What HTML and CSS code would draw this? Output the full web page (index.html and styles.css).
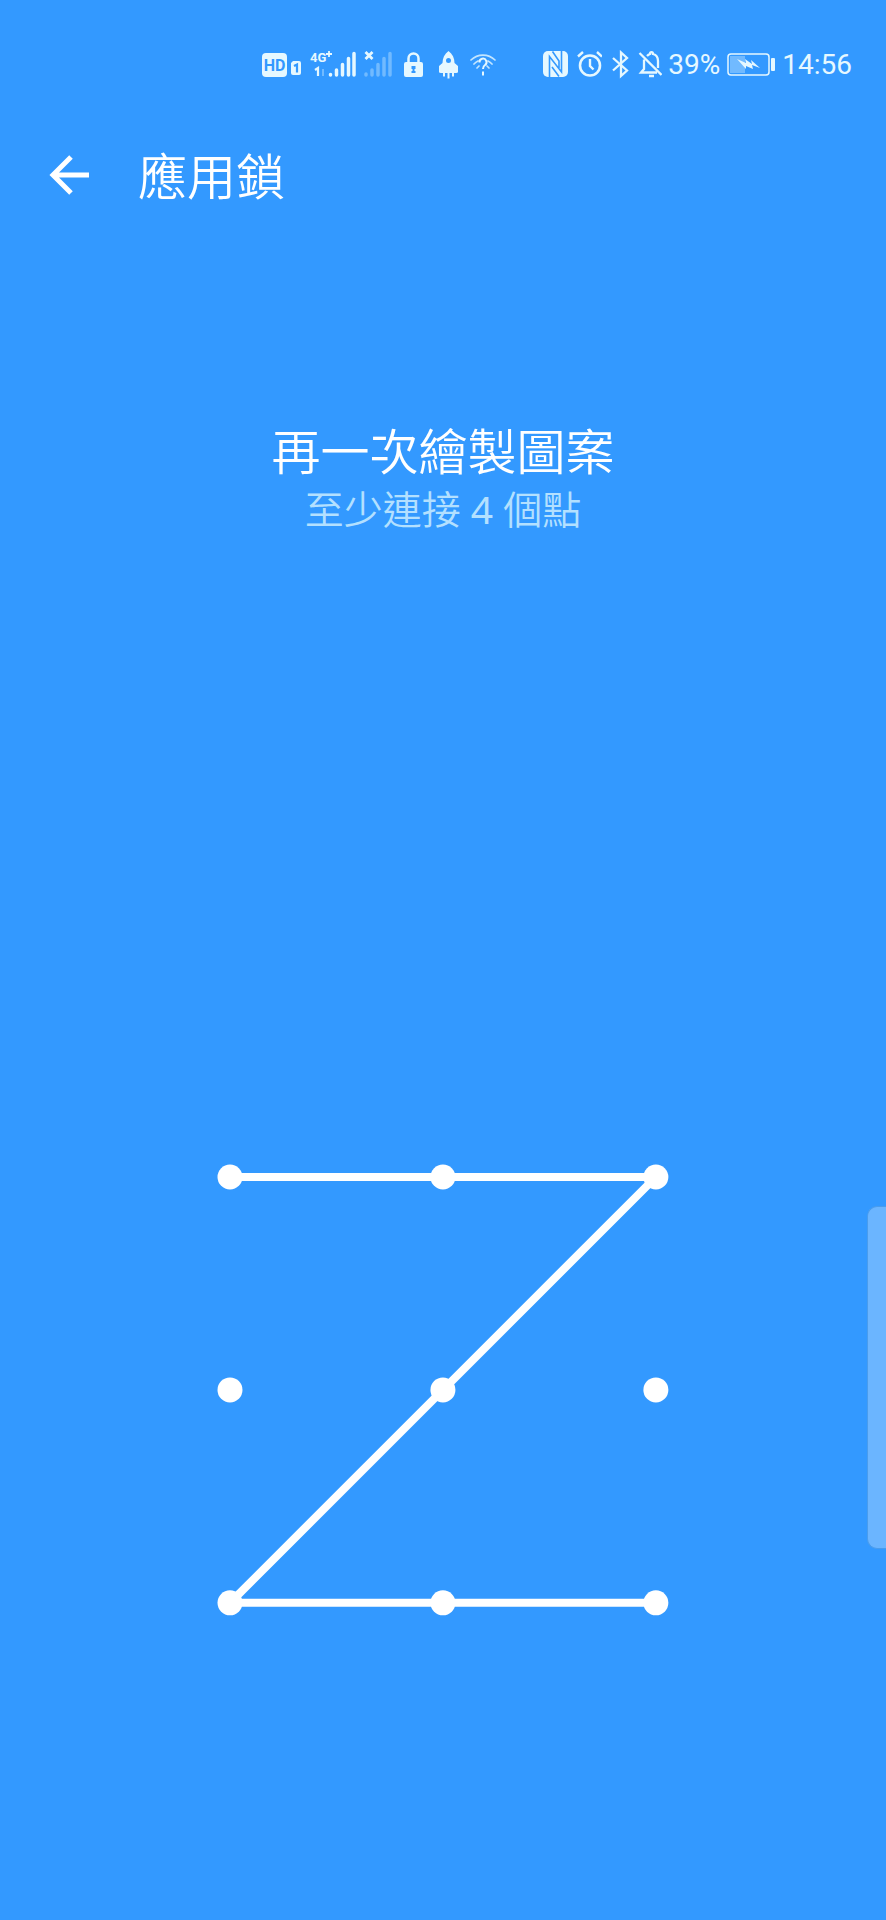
FILE: index.html
```html
<!DOCTYPE html>
<html lang="zh-Hant">
<head>
<meta charset="utf-8">
<meta name="viewport" content="width=device-width, initial-scale=1">
<title>應用鎖</title>
<link rel="stylesheet" href="styles.css">
</head>
<body>
<div class="status-bar">
  <div class="status-group">
    <svg width="40" height="30" viewBox="0 0 40 30" role="img" aria-label="HD 1">
      <rect x="0" y="3" width="25" height="24" rx="4" class="fill"/>
      <text x="12.500" y="21" class="hd">HD</text>
      <path d="M31 11h6a2 2 0 0 1 2 2v10a2 2 0 0 1-2 2h-6a2 2 0 0 1-2-2v-10z" class="fill"/>
      <path d="M32 16l3-1.500v8" class="cut" stroke-width="2.200"/>
    </svg>
    <svg width="46" height="30" viewBox="0 0 46 30" role="img" aria-label="4G+">
      <text x="0" y="12" class="net">4G</text>
      <path d="M16 4h6M19 1v6" class="line" stroke-width="1.800"/>
      <path d="M5 20l3-2v8" class="line" stroke-width="2.200"/>
      <path d="M13 19v7" class="line faint" stroke-width="2"/>
      <path d="M20.500 24.500v.5M26.500 20v5M32.500 14.500v10.500M38.500 8.500v16.500M44 3.500v21.500" class="line round" stroke-width="3.500"/>
    </svg>
    <svg width="28" height="30" viewBox="0 0 28 30" role="img" aria-label="無訊號">
      <path d="M1.500 2l7 7M8.500 2l-7 7" class="line" stroke-width="2.800"/>
      <path d="M2 24v1M8 20v5M14 14.500v10.500M20 8.500v16.500M26 3.500v21.500" class="line round faint" stroke-width="3.500"/>
    </svg>
    <svg width="28" height="30" viewBox="0 0 28 30" aria-hidden="true">
      <path d="M8.500 13V8.500a5 5 0 0 1 10 0V13" class="line" stroke-width="2.500"/>
      <rect x="4" y="12" width="19" height="15" rx="2" class="fill"/>
      <path d="M11.500 16h4v3h-1v2h1v2h-4v-2h1v-2h-1z" class="bg"/>
    </svg>
    <svg width="26" height="30" viewBox="0 0 26 30" aria-hidden="true">
      <path fill-rule="evenodd" d="M12.500 1c4 3 6 7 6 12l3.500 3v6q0 1-2 1h-15q-2 0-2-1v-6l3.500-3c0-5 2-9 6-12zM12.500 8a2.500 2.500 0 1 0 0 5 2.500 2.500 0 0 0 0-5z" class="fill"/>
      <path d="M8 22v4.500M12.500 22v6.500M17 22v4.500" class="line" stroke-width="2"/>
    </svg>
    <svg width="26" height="30" viewBox="0 0 26 30" aria-hidden="true">
      <path d="M1 10a17 17 0 0 1 24 0M4 14a12 12 0 0 1 4-3M22 14a12 12 0 0 0-4-3M7 18l2-2M19 18l-2-2" class="line round thin" stroke-width="1.700"/>
      <path d="M9.500 12.500a3.500 3.500 0 1 1 5.500 2.500c-1.500 1-2 1.500-2 4M13 21.500v4" class="line" stroke-width="2"/>
    </svg>
  </div>
  <div class="status-group status-right">
    <svg width="26" height="30" viewBox="0 0 26 30" aria-hidden="true">
      <rect x="1" y="1" width="25" height="26" rx="5" class="fill"/>
      <path d="M7.500 28V6.500L19.500 22V0M10.500 1.500l6.500 9.500V18M10 17l7 9.500" class="cut" stroke-width="1.600"/>
    </svg>
    <svg width="26" height="30" viewBox="0 0 26 30" aria-hidden="true">
      <circle cx="14" cy="15.500" r="10" class="line" stroke-width="2.600"/>
      <path d="M14 9v7l3.500 3.500M2 6.500l5-4.500M26 6.500l-5-4.500" class="line" stroke-width="2.400"/>
    </svg>
    <svg width="20" height="30" viewBox="0 0 20 30" aria-hidden="true">
      <path d="M3 8l14 12.500-6 5.500V2.500l6 5.500-14 12.500" class="line" stroke-width="2.300"/>
    </svg>
    <svg width="24" height="30" viewBox="0 0 24 30" aria-hidden="true">
      <path d="M1.500 3l22 22M6 9.500v9.500l-3 3.500h16M9 6q1.500-1.500 3-2c0-2.500 3-2.500 3 0 4 1 5 4 5 7v7M11 26h5" class="line" stroke-width="2.300"/>
    </svg>
    <span class="readout">39%</span>
    <svg width="50" height="30" viewBox="0 0 50 30" role="img" aria-label="充電中">
      <rect x="2" y="4" width="41" height="21" rx="3" class="line" stroke-width="1.500"/>
      <rect x="4" y="6" width="15" height="17" class="fill faint"/>
      <path d="M11 9l9 4-1-4 7 5-1-4 9 8-8-3 1 4-7-3 0 3z" class="fill"/>
      <rect x="45" y="8" width="4" height="13" rx="1" class="fill"/>
    </svg>
    <span class="readout">14:56</span>
  </div>
</div>

<header class="app-bar">
  <button class="back" type="button" aria-label="返回">
    <svg width="42" height="42" viewBox="0 0 42 42" aria-hidden="true">
      <path d="M41 22H5M23 4L5 22l18 18" class="arrow"/>
    </svg>
  </button>
  <h1 class="title">應用鎖</h1>
</header>

<main class="lock">
  <h2 class="prompt">再一次繪製圖案</h2>
  <p class="hint">至少連接 <span class="count">4</span> 個點</p>
  <svg class="pattern" viewBox="0 0 452 452" role="img" aria-label="解鎖圖案">
    <path class="trace" d="M13 13H439L13 439H439"/>
    <g class="dots">
      <circle cx="13" cy="13" r="12.500"/><circle cx="226" cy="13" r="12.500"/><circle cx="439" cy="13" r="12.500"/>
      <circle cx="13" cy="226" r="12.500"/><circle cx="226" cy="226" r="12.500"/><circle cx="439" cy="226" r="12.500"/>
      <circle cx="13" cy="439" r="12.500"/><circle cx="226" cy="439" r="12.500"/><circle cx="439" cy="439" r="12.500"/>
    </g>
  </svg>
</main>
<div class="edge-handle"></div>
</body>
</html>
```
FILE: styles.css
```css
* {
  box-sizing: border-box;
}

body {
  margin: 0;
  min-height: 100vh;
  background: #3399ff;
  color: #fff;
  font-family: "Noto Sans CJK TC", sans-serif;
  font-weight: 350;
}

.status-bar {
  display: flex;
  justify-content: flex-end;
  gap: 46px;
  padding: 50px 36px 0 0;
  color: #e6f8ff;
}

.status-group {
  display: flex;
  align-items: center;
  gap: 8px;
  height: 30px;
}

.status-right .readout {
  margin: 0 -2px;
}

.readout {
  font: 400 28px/30px Roboto, sans-serif;
}

.fill {
  fill: #e6f8ff;
}

.line {
  fill: none;
  stroke: #e6f8ff;
}

.round {
  stroke-linecap: round;
}

.faint {
  opacity: 0.35;
}

.thin {
  opacity: 0.8;
}

.cut {
  fill: none;
  stroke: #3399ff;
}

.bg {
  fill: #3399ff;
}

.hd {
  fill: #3399ff;
  font: 700 16px Roboto, sans-serif;
  text-anchor: middle;
}

.net {
  fill: #e6f8ff;
  font: 700 13px Roboto, sans-serif;
}

.app-bar {
  display: flex;
  align-items: center;
  gap: 48px;
  padding: 58px 48px 0;
}

.back {
  display: flex;
  padding: 0;
  border: 0;
  background: none;
  color: inherit;
}

.arrow {
  fill: none;
  stroke: #fff;
  stroke-width: 5;
}

.title,
.prompt {
  margin: 0;
  font-size: 49px;
  font-weight: 350;
  line-height: 72px;
}

.lock {
  display: flex;
  flex-direction: column;
  align-items: center;
  padding-top: 203px;
}

.hint {
  margin: 0;
  font-family: "Noto Sans", "Noto Sans CJK TC", sans-serif;
  font-size: 39px;
  line-height: 48px;
  color: #b3e0ff;
}

.count {
  font-weight: 400;
}

.pattern {
  width: 51%;
  margin-top: 631px;
}

.trace {
  fill: none;
  stroke: #fff;
  stroke-width: 8;
}

.dots {
  fill: #fff;
}

.edge-handle {
  position: absolute;
  top: 1206px;
  right: 0;
  width: 19px;
  height: 343px;
  border: 1px solid #4a9cec;
  border-right: 0;
  border-radius: 10px 0 0 10px;
  background: #6bb5ff;
}
```
